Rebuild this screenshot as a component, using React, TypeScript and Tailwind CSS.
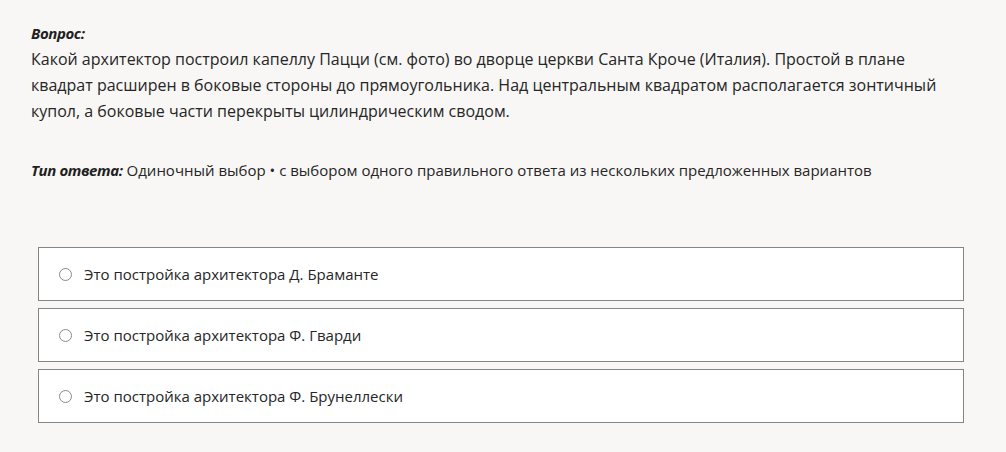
import { useState } from "react";

const options = [
  "Это постройка архитектора Д. Браманте",
  "Это постройка архитектора Ф. Гварди",
  "Это постройка архитектора Ф. Брунеллески",
];

export default function App() {
  const [selected, setSelected] = useState<number | null>(null);

  return (
    <div
      className="min-h-[452px] w-full bg-[#f8f7f5] text-[#262626]"
      style={{ fontFamily: '"Open Sans", "Noto Sans", sans-serif' }}
    >
      <div className="pl-[31px] pr-[40px] pt-[20px] text-[16px] leading-[26px]">
        <p className="text-[15px] font-bold italic tracking-[-0.4px] text-[#1f1f1f]">Вопрос:</p>
        <p className="max-w-[935px]">
          Какой архитектор построил капеллу Пацци (см. фото) во дворце церкви Санта Кроче (Италия). Простой в плане
          квадрат расширен в боковые стороны до прямоугольника. Над центральным квадратом располагается зонтичный
          купол, а боковые части перекрыты цилиндрическим сводом.
        </p>

        <p className="mt-[33px] text-[15px]">
          <span className="font-bold italic tracking-[-0.4px] text-[#1f1f1f]">Тип ответа:</span> Одиночный выбор • с
          выбором одного правильного ответа из нескольких предложенных вариантов
        </p>
      </div>

      <div className="ml-[38px] mt-[64px] flex w-[926px] flex-col gap-[7px]">
        {options.map((option, i) => (
          <label
            key={option}
            className="flex h-[54px] cursor-pointer items-center gap-[12px] border border-[#858585] bg-white pl-[20px]"
          >
            <input
              type="radio"
              name="answer"
              checked={selected === i}
              onChange={() => setSelected(i)}
              className="sr-only"
            />
            <span className="h-[13px] w-[13px] rounded-full border border-[#8a8a8a] bg-white" />
            <span className="text-[15px]">{option}</span>
          </label>
        ))}
      </div>
    </div>
  );
}
